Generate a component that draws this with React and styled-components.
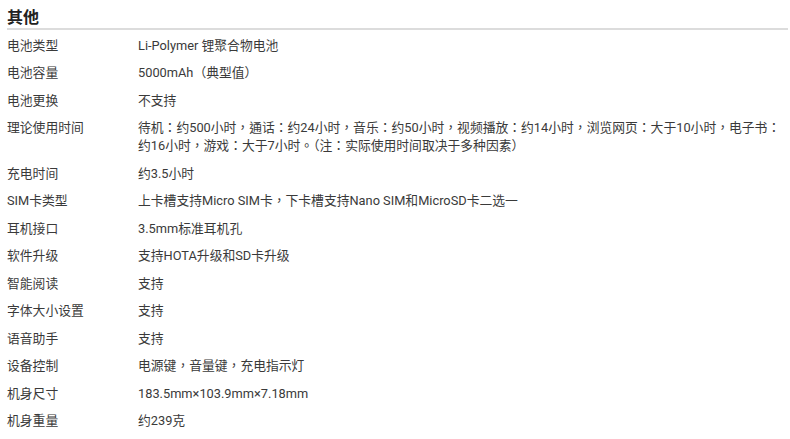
import React from 'react';
import styled, { createGlobalStyle } from 'styled-components';

const GlobalStyle = createGlobalStyle`
  html, body {
    margin: 0;
    padding: 0;
    background: #fff;
  }
  body {
    font-family: Roboto, "Noto Sans CJK TC", sans-serif;
  }
`;

const specs = [
  ['电池类型', 'Li-Polymer 锂聚合物电池'],
  ['电池容量', '5000mAh（典型值）'],
  ['电池更换', '不支持'],
  ['理论使用时间', ['待机：约500小时，通话：约24小时，音乐：约50小时，视频播放：约14小时，浏览网页：大于10小时，电子书：', '约16小时，游戏：大于7小时。（注：实际使用时间取决于多种因素）']],
  ['充电时间', '约3.5小时'],
  ['SIM卡类型', '上卡槽支持Micro SIM卡，下卡槽支持Nano SIM和MicroSD卡二选一'],
  ['耳机接口', '3.5mm标准耳机孔'],
  ['软件升级', '支持HOTA升级和SD卡升级'],
  ['智能阅读', '支持'],
  ['字体大小设置', '支持'],
  ['语音助手', '支持'],
  ['设备控制', '电源键，音量键，充电指示灯'],
  ['机身尺寸', '183.5mm×103.9mm×7.18mm'],
  ['机身重量', '约239克'],
];

export default function App() {
  return (
    <>
      <GlobalStyle />
      <Section>
        <Title>其他</Title>
        <SpecList>
          {specs.map(([label, value]) => (
            <Row key={label}>
              <Label>{label}</Label>
              <Value>
                {Array.isArray(value)
                  ? value.map((line) => <Line key={line}>{line}</Line>)
                  : value}
              </Value>
            </Row>
          ))}
        </SpecList>
      </Section>
    </>
  );
}

const Section = styled.div`
  width: 781px;
  padding: 0 0 0 7px;
  color: #333;
`;

const Title = styled.h3`
  margin: 0;
  padding-top: 7px;
  height: 21px;
  font-family: "Noto Sans CJK SC", sans-serif;
  font-size: 16px;
  line-height: 19px;
  font-weight: bold;
  color: #222;
  border-bottom: 2px solid #dcdcdc;
`;

const SpecList = styled.div`
  display: flex;
  flex-direction: column;
  padding-top: 2px;
`;

const Row = styled.div`
  display: grid;
  grid-template-columns: 131px 1fr;
  padding: 4.75px 0;
  font-size: 12.8px;
  line-height: 18px;
`;

const Label = styled.div`
  color: #3a3a3a;
`;

const Value = styled.div`
  color: #3a3a3a;
`;

const Line = styled.span`
  display: block;
  white-space: nowrap;
`;
